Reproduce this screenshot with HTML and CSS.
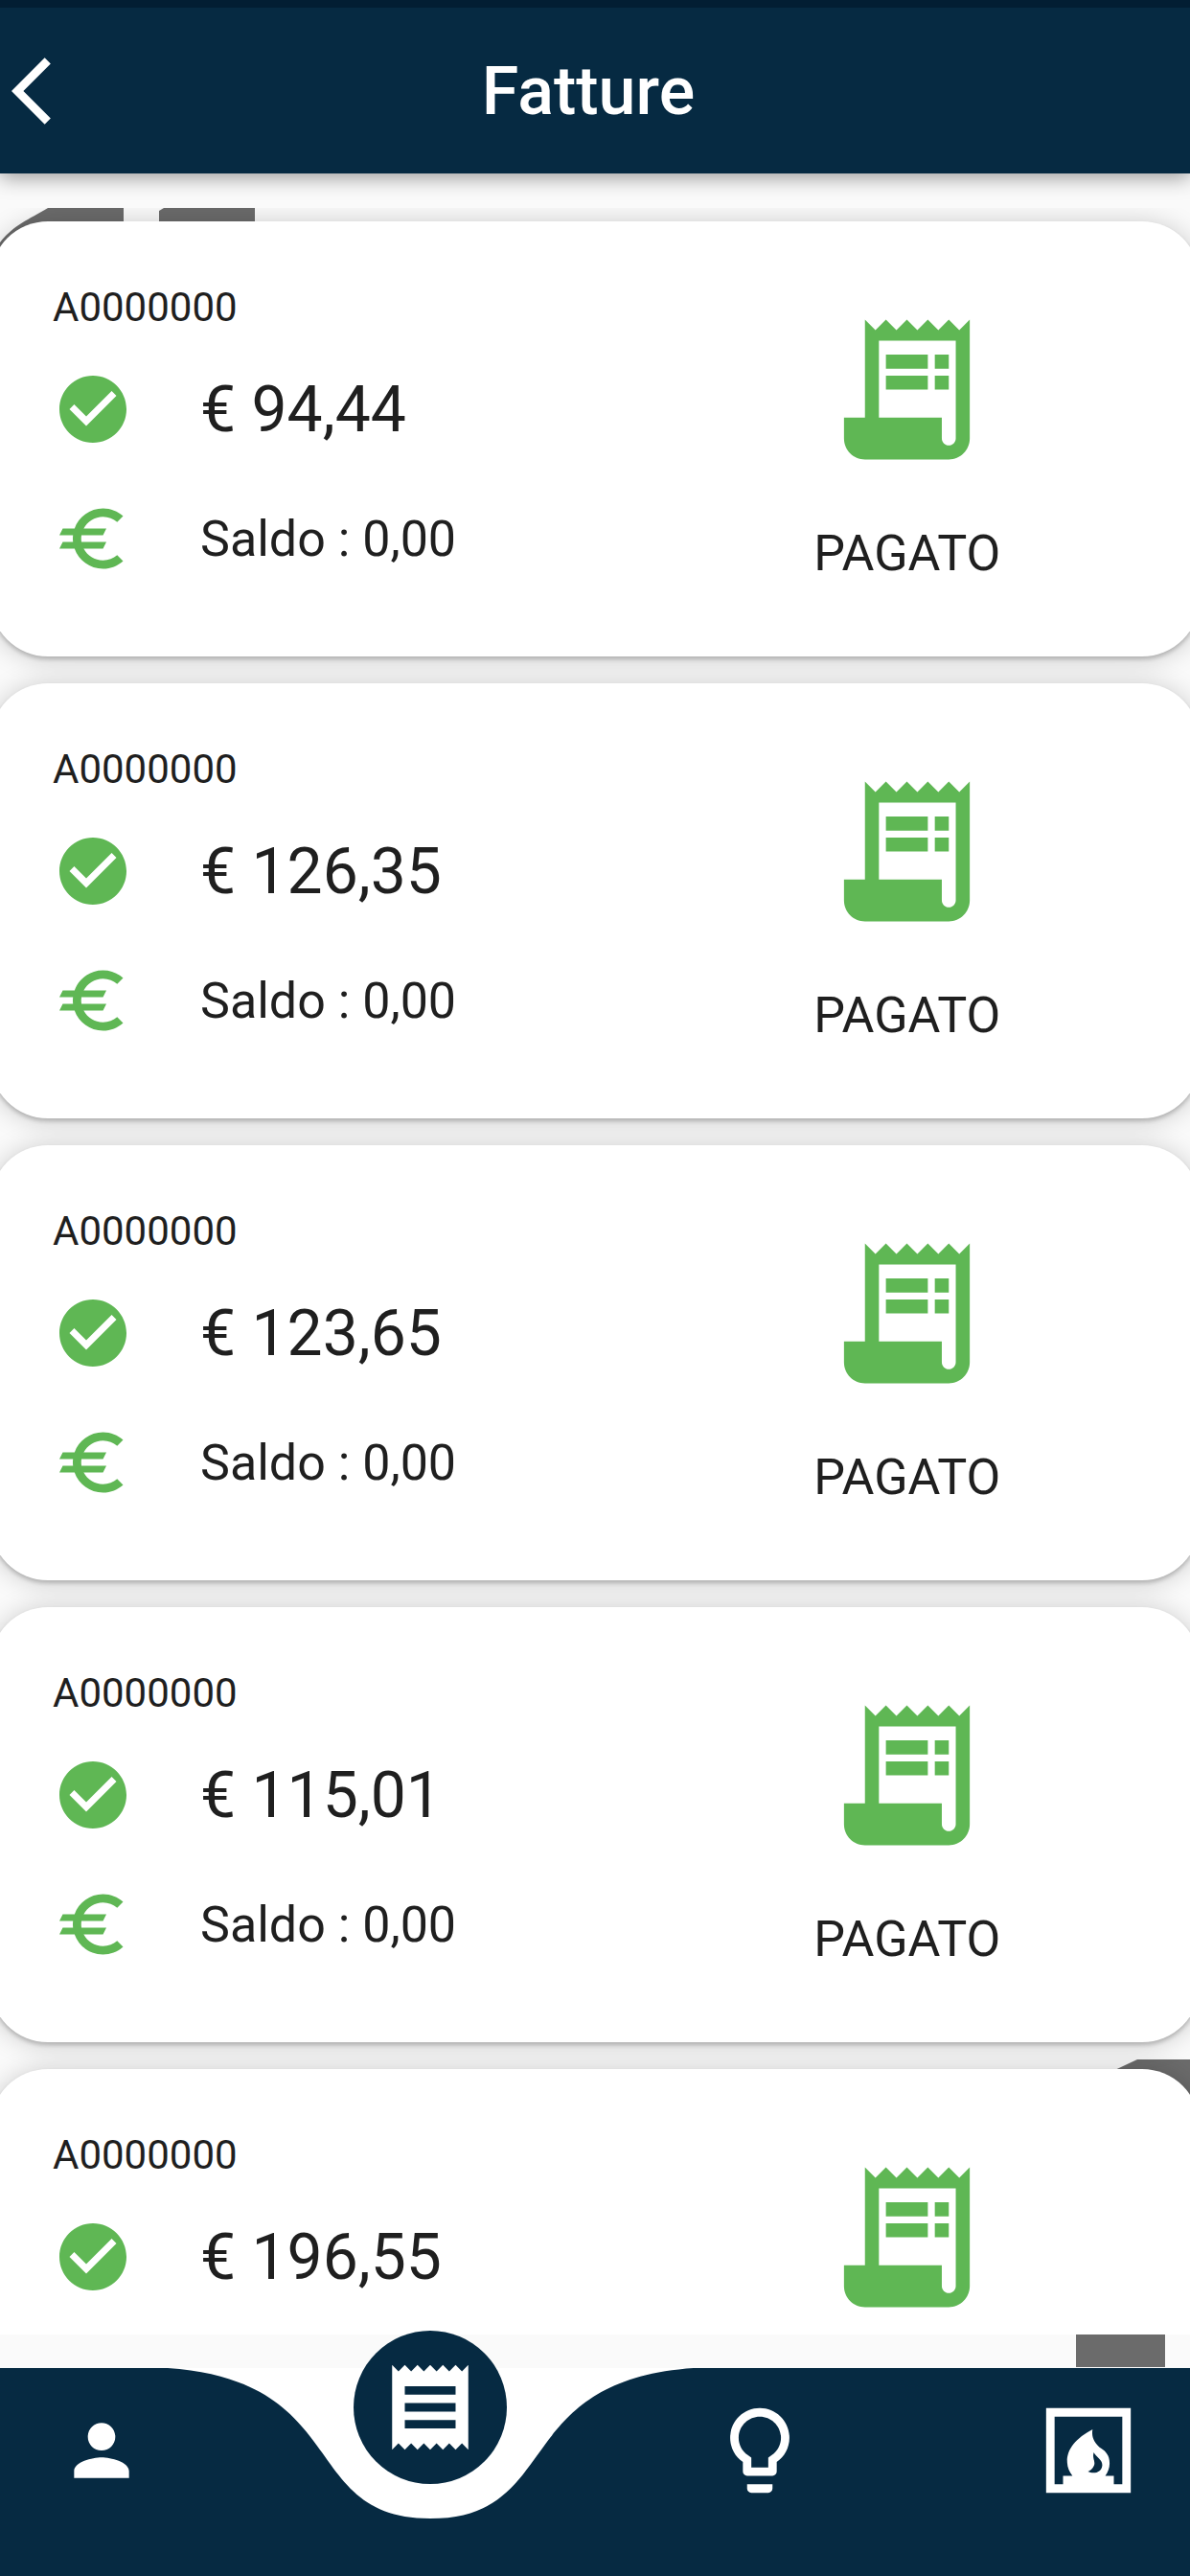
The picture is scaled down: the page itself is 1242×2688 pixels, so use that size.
FILE: index.html
```
<!DOCTYPE html>
<html lang="it">
<head>
    <meta charset="UTF-8">
    <meta name="viewport" content="width=device-width, initial-scale=1.0">
    <title>Fatture</title>
    <link rel="stylesheet" href="styles.css">
</head>
<body>
    <!-- Shared icons -->
    <svg class="icon-defs" aria-hidden="true">
        <symbol id="icon-check" viewBox="0 0 24 24">
            <path d="M12 2C6.48 2 2 6.48 2 12s4.48 10 10 10 10-4.48 10-10S17.52 2 12 2zm-2 15l-5-5 1.41-1.41L10 14.17l7.59-7.59L19 8l-9 9z"/>
        </symbol>
        <symbol id="icon-euro" viewBox="0 0 24 24">
            <path d="M15 18.5c-2.51 0-4.68-1.42-5.76-3.5H15l1-2H8.58c-.05-.33-.08-.66-.08-1s.03-.67.08-1H15l1-2H9.24C10.32 6.92 12.5 5.5 15 5.5c1.61 0 3.09.59 4.23 1.57L21 5.3C19.41 3.87 17.3 3 15 3c-3.92 0-7.24 2.51-8.48 6H3l-1 2h4.06c-.04.33-.06.66-.06 1s.02.67.06 1H3l-1 2h4.52c1.24 3.49 4.56 6 8.48 6 2.31 0 4.41-.87 6-2.3l-1.78-1.77c-1.13.98-2.6 1.57-4.22 1.57z"/>
        </symbol>
        <symbol id="icon-bill" viewBox="0 0 24 24">
            <path d="M19.5 3.5L18 2l-1.5 1.5L15 2l-1.5 1.5L12 2l-1.5 1.5L9 2 7.5 3.5 6 2v14H3v3c0 1.66 1.34 3 3 3h12c1.66 0 3-1.34 3-3V2l-1.5 1.5zM19 19c0 .55-.45 1-1 1s-1-.45-1-1v-3H8V5h11v14z"/>
            <path d="M9 7h6v2H9zM16 7h2v2h-2zM9 10h6v2H9zM16 10h2v2h-2z"/>
        </symbol>
    </svg>

    <!-- Header -->
    <header class="app-bar">
        <button class="back-button" type="button" aria-label="Indietro">
            <svg viewBox="0 0 24 24"><path d="M11.67 3.87L9.9 2.1 0 12l9.9 9.9 1.77-1.77L3.54 12z"/></svg>
        </button>
        <h1 class="app-title">Fatture</h1>
    </header>

    <!-- Invoices -->
    <main class="content">
        <svg class="watermark" viewBox="0 0 1242 2290" preserveAspectRatio="none" aria-hidden="true">
            <path d="M0 72C14 54 30 48 50 36h79v60H0zM166 39l5-3h95v60H166zM1155 1983l32-15h55v100h-87zM1123 2200h93v89h-93z"/>
        </svg>
        <div class="invoice-list">
            <article class="card">
                <div class="card-details">
                    <p class="invoice-number">A0000000</p>
                    <div class="row"><svg class="icon"><use href="#icon-check"/></svg><span class="amount">€ 94,44</span></div>
                    <div class="row"><svg class="icon"><use href="#icon-euro"/></svg><span class="balance">Saldo : 0,00</span></div>
                </div>
                <div class="card-status">
                    <svg class="bill-icon"><use href="#icon-bill"/></svg>
                    <p class="status">PAGATO</p>
                </div>
            </article>
            <article class="card">
                <div class="card-details">
                    <p class="invoice-number">A0000000</p>
                    <div class="row"><svg class="icon"><use href="#icon-check"/></svg><span class="amount">€ 126,35</span></div>
                    <div class="row"><svg class="icon"><use href="#icon-euro"/></svg><span class="balance">Saldo : 0,00</span></div>
                </div>
                <div class="card-status">
                    <svg class="bill-icon"><use href="#icon-bill"/></svg>
                    <p class="status">PAGATO</p>
                </div>
            </article>
            <article class="card">
                <div class="card-details">
                    <p class="invoice-number">A0000000</p>
                    <div class="row"><svg class="icon"><use href="#icon-check"/></svg><span class="amount">€ 123,65</span></div>
                    <div class="row"><svg class="icon"><use href="#icon-euro"/></svg><span class="balance">Saldo : 0,00</span></div>
                </div>
                <div class="card-status">
                    <svg class="bill-icon"><use href="#icon-bill"/></svg>
                    <p class="status">PAGATO</p>
                </div>
            </article>
            <article class="card">
                <div class="card-details">
                    <p class="invoice-number">A0000000</p>
                    <div class="row"><svg class="icon"><use href="#icon-check"/></svg><span class="amount">€ 115,01</span></div>
                    <div class="row"><svg class="icon"><use href="#icon-euro"/></svg><span class="balance">Saldo : 0,00</span></div>
                </div>
                <div class="card-status">
                    <svg class="bill-icon"><use href="#icon-bill"/></svg>
                    <p class="status">PAGATO</p>
                </div>
            </article>
            <article class="card">
                <div class="card-details">
                    <p class="invoice-number">A0000000</p>
                    <div class="row"><svg class="icon"><use href="#icon-check"/></svg><span class="amount">€ 196,55</span></div>
                </div>
                <div class="card-status">
                    <svg class="bill-icon"><use href="#icon-bill"/></svg>
                </div>
            </article>
        </div>
    </main>

    <!-- Bottom navigation -->
    <nav class="bottom-nav">
        <svg class="nav-shape" viewBox="65 0 1242 217" preserveAspectRatio="none" aria-hidden="true">
            <path d="M65 0H240C432 13 377 157 514 157C652 157 597 13 789 0H1307V217H65z"/>
        </svg>
        <a class="nav-item" href="#" aria-label="Profilo">
            <svg class="nav-icon small" viewBox="0 0 24 24"><path d="M12 12c2.21 0 4-1.79 4-4s-1.79-4-4-4-4 1.79-4 4 1.79 4 4 4zm0 2c-2.67 0-8 1.34-8 4v2h16v-2c0-2.66-5.33-4-8-4z"/></svg>
        </a>
        <a class="nav-item" href="#" aria-label="Fatture" aria-current="page">
            <span class="nav-bubble">
                <svg class="nav-icon" viewBox="0 0 24 24"><path d="M18 17H6v-2h12v2zm0-4H6v-2h12v2zm0-4H6V7h12v2zM3 22l1.5-1.5L6 22l1.5-1.5L9 22l1.5-1.5L12 22l1.5-1.5L15 22l1.5-1.5L18 22l1.5-1.5L21 22V2l-1.5 1.5L18 2l-1.5 1.5L15 2l-1.5 1.5L12 2l-1.5 1.5L9 2 7.5 3.5 6 2 4.5 3.5 3 2v20z"/></svg>
            </span>
        </a>
        <a class="nav-item" href="#" aria-label="Luce">
            <svg class="nav-icon" viewBox="0 0 24 24"><path d="M9 21c0 .55.45 1 1 1h4c.55 0 1-.45 1-1v-1H9v1zm3-19C8.14 2 5 5.14 5 9c0 2.38 1.19 4.47 3 5.74V17c0 .55.45 1 1 1h6c.55 0 1-.45 1-1v-2.26c1.81-1.27 3-3.36 3-5.74 0-3.86-3.14-7-7-7zm2.85 11.1l-.85.6V16h-4v-2.3l-.85-.6C7.8 12.16 7 10.63 7 9c0-2.76 2.24-5 5-5s5 2.24 5 5c0 1.63-.8 3.16-2.15 4.1z"/></svg>
        </a>
        <a class="nav-item" href="#" aria-label="Gas">
            <svg class="nav-icon" viewBox="0 0 24 24"><path d="M2 2v20h20V2H2zm9.86 14.96c.76-.24 1.4-1.04 1.53-1.63.13-.56-.1-1.05-.2-1.6-.08-.46-.07-.85.08-1.28.54 1.21 2.15 1.64 1.98 3.18-.19 1.69-2.11 1.99-3.39 1.33zM20 20h-2v-2h-2.02c.64-.84 1.02-1.87 1.02-3 0-1.89-1.09-2.85-1.85-3.37C12.2 9.61 13 7 13 7c-6.73 3.57-6.02 7.47-6 8 .03.96.49 2.07 1.23 3H6v2H4V4h16v16z"/></svg>
        </a>
    </nav>
</body>
</html>
```
FILE: styles.css
```
/* General Styles */
* {
    box-sizing: border-box;
}

body {
    margin: 0;
    height: 100vh;
    display: flex;
    flex-direction: column;
    overflow: hidden;
    font-family: Roboto, sans-serif;
    background-color: #fff;
    color: #1f1f1f;
}

h1,
p {
    margin: 0;
}

svg {
    display: block;
    fill: currentColor;
}

.icon-defs {
    position: absolute;
    width: 0;
    height: 0;
}

/* Header */
.app-bar {
    flex: none;
    display: grid;
    grid-template-columns: 110px 1fr 110px;
    align-items: center;
    height: 181px;
    padding-right: 14px;
    border-top: 8px solid #021e33;
    background: #062a42;
    color: #fff;
    box-shadow: 0 4px 20px rgba(0, 0, 0, 0.4);
    z-index: 2;
}

.back-button {
    padding: 0 0 0 12px;
    border: none;
    background: none;
    color: inherit;
    cursor: pointer;
}

.back-button svg {
    width: 84px;
    height: 84px;
}

.app-title {
    font-size: 70px;
    font-weight: 500;
    line-height: 84px;
    text-align: center;
}

/* Invoices */
.content {
    flex: 1;
    min-height: 0;
    position: relative;
    display: flex;
    padding: 36px 0 35px;
    background: #fafafa;
}

.watermark {
    position: absolute;
    top: 0;
    left: 0;
    width: 100%;
    height: 100%;
    color: #6b6b6b;
}

.invoice-list {
    flex: 1;
    position: relative;
    padding-top: 14px;
    overflow: hidden;
}

/* Cards run slightly past both screen edges */
.card {
    display: flex;
    height: 454px;
    margin: 0 -10px 28px;
    padding-left: 65px;
    border-radius: 60px;
    background: #fff;
    box-shadow: 0 3px 4px rgba(0, 0, 0, 0.2), 0 2px 28px rgba(0, 0, 0, 0.2);
}

.card-details {
    flex: 1;
    padding-top: 66px;
}

.invoice-number {
    margin-bottom: 40px;
    font-size: 42px;
    line-height: 48px;
}

.row {
    display: flex;
    align-items: center;
    gap: 70px;
    height: 84px;
    margin-bottom: 51px;
}

.icon {
    width: 84px;
    height: 84px;
    color: #5fb754;
}

.amount {
    font-size: 66px;
}

.balance {
    font-size: 52px;
}

.card-status {
    width: 51%;
    display: flex;
    flex-direction: column;
    align-items: center;
    gap: 54px;
    padding-top: 88px;
}

.bill-icon {
    width: 175px;
    height: 175px;
    color: #5fb754;
}

.status {
    font-size: 52px;
    line-height: 60px;
}

/* Bottom Navigation */
.bottom-nav {
    flex: none;
    position: relative;
    display: flex;
    justify-content: space-between;
    height: 217px;
    padding-bottom: 45px;
    background: #fff;
}

.nav-shape {
    position: absolute;
    top: 0;
    left: 0;
    width: 100%;
    height: 100%;
    color: #062a42;
}

.nav-item {
    position: relative;
    display: flex;
    align-items: center;
    justify-content: center;
    width: 212px;
    color: #fff;
}

.nav-icon {
    width: 106px;
    height: 106px;
}

.nav-icon.small {
    width: 86px;
    height: 86px;
}

.nav-bubble {
    position: absolute;
    top: -39px;
    display: flex;
    align-items: center;
    justify-content: center;
    width: 160px;
    height: 160px;
    border-radius: 50%;
    background: #062a42;
}
```
